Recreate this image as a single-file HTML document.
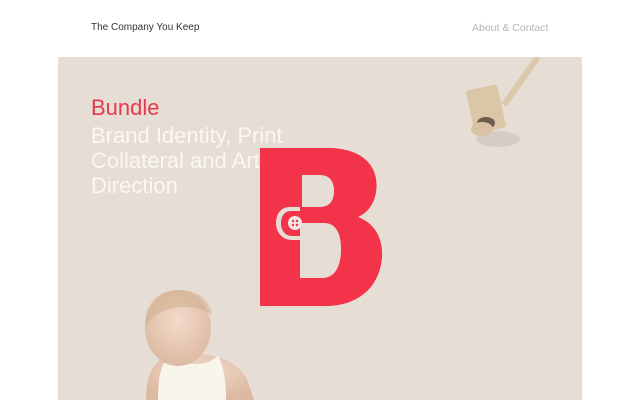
<!DOCTYPE html>
<html><head><style>
body{margin:0;width:640px;height:412px;background:#fff;position:relative;overflow:hidden;font-family:"Liberation Sans",sans-serif}
.nav{position:absolute;top:22px;font-size:10px}
.panel{position:absolute;left:58px;top:57px;width:524px;height:343px;background:#e6ddd5;overflow:hidden}
.t{position:absolute;left:33px;font-weight:300}
</style></head><body>
<div class="nav" style="left:91px;color:#333">The Company You Keep</div>
<div class="nav" style="left:472px;color:#b5b5b5;font-size:10.5px">About &amp; Contact</div>
<div class="panel">
<svg width="524" height="343" style="position:absolute;left:0;top:0">
<defs><radialGradient id="sk" cx="50%" cy="40%" r="60%"><stop offset="0" stop-color="#f3dccb"/><stop offset="1" stop-color="#dcb9a2"/></radialGradient></defs>
<ellipse cx="440" cy="82" rx="22" ry="8" fill="#000" opacity=".07"/>
<line x1="480" y1="0" x2="446" y2="48" stroke="#dcc7a8" stroke-width="6"/>
<rect x="412" y="30" width="32" height="44" rx="3" fill="#dcc6a8" transform="rotate(-12 428 52)"/>
<ellipse cx="428" cy="66" rx="9" ry="6" fill="#6d5d50"/>
<ellipse cx="424" cy="72" rx="11" ry="7" fill="#d9c3a3"/>
<path d="M202 91 H270 C305 91 322 110 318 135 C316 148 309 156 300 160 C316 166 325 180 324 200 C322 230 300 249 268 249 H202 Z" fill="#f2334a"/>
<path d="M244 118 H262 C272 118 276 125 276 134 C276 143 272 150 262 150 H244 Z" fill="#e6ddd5"/>
<path d="M242 166 H266 C277 166 283 175 283 192 C283 211 276 221 264 221 H242 Z" fill="#e6ddd5"/>
<path d="M242 150 H232 C222 150 218 158 218 166 C218 175 224 183 234 183 H242 Z" fill="#e6ddd5"/>
<path d="M242 154 H233 C226 154 223 160 223 166 C223 173 227 179 234 179 H242 Z" fill="#f2334a"/>
<circle cx="237" cy="166" r="7" fill="#f3e8e3"/>
<g fill="#f2334a"><circle cx="235" cy="164" r="1.2"/><circle cx="239" cy="164" r="1.2"/><circle cx="235" cy="168" r="1.2"/><circle cx="239" cy="168" r="1.2"/></g>
<path d="M88 343 C88 310 100 300 120 296 C150 296 175 300 188 320 C192 330 194 338 196 343 Z" fill="url(#sk)"/>
<path d="M100 343 C100 318 104 304 112 300 C130 310 150 310 160 298 C166 310 168 325 168 343 Z" fill="#f8f5ea"/>
<ellipse cx="120" cy="271" rx="33" ry="38" fill="url(#sk)"/>
<path d="M87 270 C86 245 102 233 120 233 C140 233 152 244 154 258 C140 246 100 246 87 270Z" fill="#cfae8e" opacity=".55"/>
</svg>
<div class="t" style="top:38px;font-size:22px;color:#e63a4c">Bundle</div>
<div class="t" style="top:66px;font-size:22px;line-height:25px;color:#fbf7f3">Brand Identity, Print<br>Collateral and Art<br>Direction</div>
</div>
</body></html>
